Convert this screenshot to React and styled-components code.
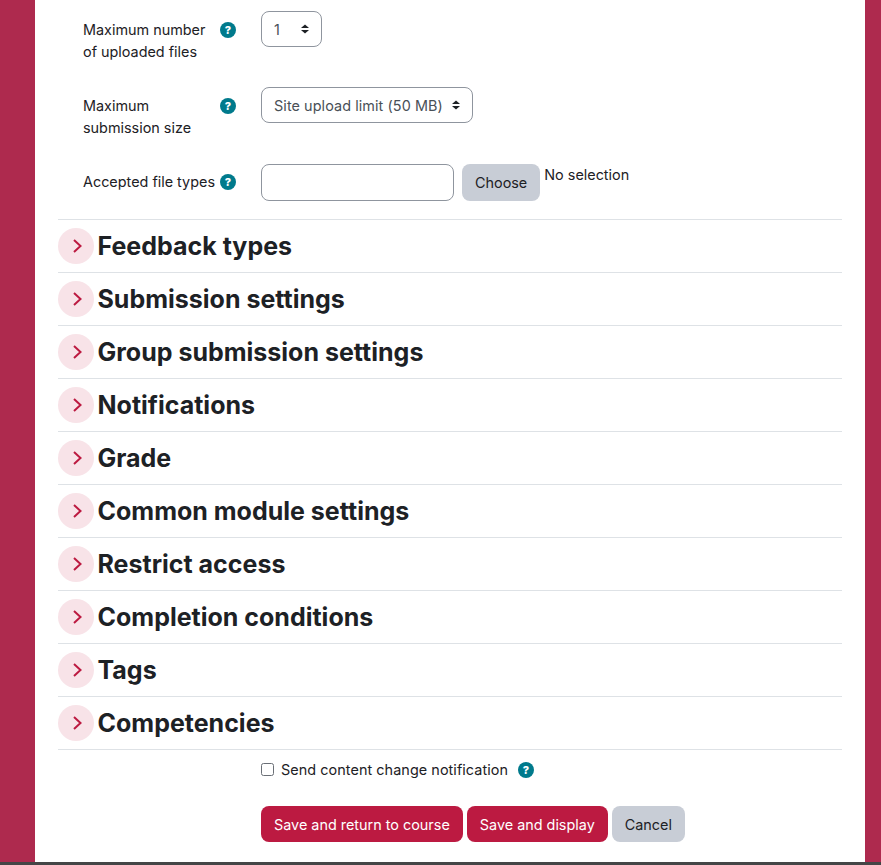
import React from "react";
import styled, { createGlobalStyle } from "styled-components";

const GlobalStyle = createGlobalStyle`
  html, body {
    margin: 0;
    padding: 0;
    background: #fff;
  }
  * {
    box-sizing: border-box;
  }
`;

const Page = styled.div`
  height: 865px;
  display: flex;
  flex-direction: column;
  overflow: hidden;
  font-family: Inter, "Noto Sans", sans-serif;
  font-size: 14.4px;
  color: #1d2125;
`;

const Columns = styled.div`
  flex: 1;
  display: flex;
  min-height: 0;
`;

const SideBar = styled.div`
  width: ${(p) => p.$width}px;
  background: #ae2a4e;
`;

const Main = styled.main`
  flex: 1;
  background: #fff;
  padding: 11px 23px 0;
`;

const FormRow = styled.div`
  display: grid;
  grid-template-columns: 137px 41px 1fr;
  padding-left: 25px;
  min-height: ${(p) => p.$height}px;
  align-items: start;
`;

const RowLabel = styled.label`
  line-height: 22px;
  margin-top: ${(p) => (p.$single ? 7 : 8)}px;
`;

const HelpBadge = styled.span`
  display: inline-flex;
  align-items: center;
  justify-content: center;
  width: 16px;
  height: 16px;
  border-radius: 50%;
  background: #007a8c;
  color: #fff;
  font-size: 11px;
  font-weight: 800;
  line-height: 1;
  margin-top: ${(p) => p.$top || 0}px;
`;

const SelectBox = styled.div`
  position: relative;
  display: inline-block;
  width: ${(p) => p.$width}px;
  height: 36px;
`;

const Select = styled.select`
  appearance: none;
  width: 100%;
  height: 100%;
  padding: 0 12px;
  border: 1px solid #8f959e;
  border-radius: 8px;
  background: #fff;
  color: #495057;
  font: inherit;
  letter-spacing: 0.08px;
  outline: none;
`;

const SelectArrows = styled.svg`
  position: absolute;
  right: 12px;
  top: 13px;
  width: 10px;
  height: 10px;
  pointer-events: none;
`;

const FileControls = styled.div`
  display: flex;
  align-items: flex-start;
`;

const TextInput = styled.input`
  width: 193px;
  height: 37px;
  border: 1px solid #8f959e;
  border-radius: 8px;
  background: #fff;
  outline: none;
`;

const Button = styled.button`
  height: ${(p) => p.$height || 36}px;
  padding: 0 13px;
  border: none;
  border-radius: 8px;
  background: ${(p) => (p.$primary ? "#bc1a41" : "#c8cdd6")};
  color: ${(p) => (p.$primary ? "#fff" : "#1d2125")};
  font: inherit;
  white-space: nowrap;
`;

const ChooseButton = styled(Button)`
  margin-left: 8px;
`;

const NoSelection = styled.span`
  margin: 2px 0 0 4px;
  line-height: 18px;
  color: #1d2125;
`;

const SectionList = styled.div`
  margin-top: 18px;
  border-bottom: 1px solid #dee2e6;
`;

const Section = styled.div`
  height: 53px;
  display: flex;
  align-items: center;
  gap: 3.5px;
  border-top: 1px solid #dee2e6;
`;

const Toggle = styled.span`
  flex: none;
  width: 36px;
  height: 36px;
  border-radius: 50%;
  background: #f8e3e8;
  display: flex;
  align-items: center;
  justify-content: center;
`;

const ToggleChevron = styled.svg`
  margin-left: 2px;
`;

const SectionTitle = styled.h3`
  margin: 0;
  padding-top: 1px;
  font-size: 25px;
  font-weight: 700;
  line-height: 29px;
  color: #1d2125;
`;

const CheckRow = styled.div`
  display: flex;
  align-items: center;
  margin: 10px 0 0 203px;
  height: 18px;
`;

const Checkbox = styled.input`
  appearance: none;
  width: 13px;
  height: 13px;
  margin: 0 7px 0 0;
  border: 1px solid #6a6f76;
  border-radius: 2.5px;
  background: #fff;
`;

const CheckLabel = styled.label`
  margin-right: 10px;
  letter-spacing: 0.06px;
`;

const ButtonRow = styled.div`
  display: flex;
  gap: 4px;
  margin: 28px 0 0 203px;
`;

const BottomStrip = styled.div`
  height: 3px;
  background: #444546;
`;

const sections = [
  "Feedback types",
  "Submission settings",
  "Group submission settings",
  "Notifications",
  "Grade",
  "Common module settings",
  "Restrict access",
  "Completion conditions",
  "Tags",
  "Competencies",
];

const Arrows = () => (
  <SelectArrows viewBox="0 0 10 10">
    <path d="M5 0.5 L9 4 H1 Z" fill="#1d2125" />
    <path d="M5 9.5 L9 6 H1 Z" fill="#1d2125" />
  </SelectArrows>
);

const Chevron = () => (
  <ToggleChevron width="10" height="14" viewBox="0 0 10 14" fill="none">
    <path d="M2 1 L8.5 7 L2 13" stroke="#bc1a41" strokeWidth="2" />
  </ToggleChevron>
);

export default function App() {
  return (
    <Page>
      <GlobalStyle />
      <Columns>
        <SideBar $width={35} />
        <Main>
          <FormRow $height={76}>
            <RowLabel>Maximum number of uploaded files</RowLabel>
            <HelpBadge $top={11}>?</HelpBadge>
            <SelectBox $width={61}>
              <Select defaultValue="1">
                <option>1</option>
              </Select>
              <Arrows />
            </SelectBox>
          </FormRow>
          <FormRow $height={77}>
            <RowLabel>Maximum submission size</RowLabel>
            <HelpBadge $top={11}>?</HelpBadge>
            <SelectBox $width={212}>
              <Select>
                <option>Site upload limit (50 MB)</option>
              </Select>
              <Arrows />
            </SelectBox>
          </FormRow>
          <FormRow $height={37}>
            <RowLabel $single>Accepted file types</RowLabel>
            <HelpBadge $top={10}>?</HelpBadge>
            <FileControls>
              <TextInput type="text" />
              <ChooseButton $height={37}>Choose</ChooseButton>
              <NoSelection>No selection</NoSelection>
            </FileControls>
          </FormRow>

          <SectionList>
            {sections.map((title) => (
              <Section key={title}>
                <Toggle>
                  <Chevron />
                </Toggle>
                <SectionTitle>{title}</SectionTitle>
              </Section>
            ))}
          </SectionList>

          <CheckRow>
            <Checkbox type="checkbox" />
            <CheckLabel>Send content change notification</CheckLabel>
            <HelpBadge $top={2}>?</HelpBadge>
          </CheckRow>

          <ButtonRow>
            <Button $primary>Save and return to course</Button>
            <Button $primary>Save and display</Button>
            <Button>Cancel</Button>
          </ButtonRow>
        </Main>
        <SideBar $width={16} />
      </Columns>
      <BottomStrip />
    </Page>
  );
}
